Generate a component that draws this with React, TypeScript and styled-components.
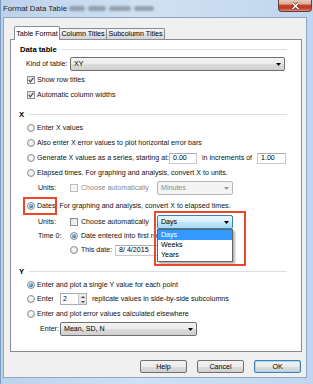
import React from 'react'
import styled, { createGlobalStyle } from 'styled-components'

const GlobalStyle = createGlobalStyle`
  html, body {
    margin: 0;
    padding: 0;
  }
  body {
    width: 313px;
    height: 384px;
    overflow: hidden;
    font-family: 'Liberation Sans', Arial, sans-serif;
    font-size: 7.1px;
    color: #000;
  }
  * {
    box-sizing: border-box;
  }
`

const Window = styled.div`
  width: 313px;
  height: 384px;
  display: flex;
  flex-direction: column;
  padding: 0 6px 6px 2px;
  border-left: 1px solid #7e9cc0;
  background: linear-gradient(90deg, #bcd2eb 0%, #d0e1f3 45%, #c0d6ee 100%);
`

const TitleBar = styled.div`
  height: 17px;
  display: flex;
  align-items: flex-start;
  margin-right: -6px;
  flex-shrink: 0;
`

const Title = styled.span`
  font-size: 7.8px;
  color: #1b1b1b;
  margin-top: 4px;
  white-space: nowrap;
`

const Smudges = styled.div`
  display: flex;
  margin-top: 6px;
  margin-left: 2px;
`

const Smudge = styled.span<{ $w: number }>`
  width: ${({ $w }) => $w}px;
  height: 5px;
  margin-right: 3px;
  border-radius: 3px;
  background: #6f7882;
  opacity: 0.6;
  filter: blur(1.2px);
`

const CloseButton = styled.div`
  margin-left: auto;
  margin-right: 1px;
  width: 34px;
  height: 12px;
  border: 1px solid #6a3b31;
  border-top: none;
  border-radius: 0 0 4px 4px;
  background: linear-gradient(180deg, #e6c9bb 0%, #d8aa98 38%, #c8452f 45%, #bd3722 72%, #d48c7b 100%);
  display: flex;
  align-items: center;
  justify-content: center;
`

const Client = styled.div`
  flex: 1;
  display: flex;
  flex-direction: column;
  background: #f0f0f0;
  border: 1px solid #8ea7c4;
`

const TabStrip = styled.div`
  height: 13px;
  margin-top: 8px;
  margin-left: 11px;
  display: flex;
  align-items: flex-start;
  flex-shrink: 0;
`

const Tab = styled.div<{ $active?: boolean; $w: number }>`
  position: relative;
  width: ${({ $w }) => $w}px;
  height: ${({ $active }) => ($active ? 14 : 11)}px;
  margin-top: ${({ $active }) => ($active ? 0 : 2)}px;
  margin-left: -1px;
  z-index: ${({ $active }) => ($active ? 2 : 0)};
  border: 1px solid #898c95;
  border-bottom: none;
  border-radius: 2px 2px 0 0;
  background: ${({ $active }) => ($active ? '#fff' : 'linear-gradient(180deg, #f3f3f3 0%, #ebebeb 50%, #dedede 51%, #d7d7d7 100%)')};
  display: flex;
  align-items: center;
  justify-content: center;
  white-space: nowrap;
`

const Panel = styled.div`
  position: relative;
  z-index: 1;
  margin-left: 6px;
  width: 292px;
  height: 313px;
  background: #fff;
  border: 1px solid #898c95;
  display: flex;
  flex-direction: column;
  flex-shrink: 0;
`

const Row = styled.div<{ $mt?: number; $pl?: number }>`
  position: relative;
  height: 14px;
  flex-shrink: 0;
  display: flex;
  align-items: center;
  margin-top: ${({ $mt }) => $mt ?? 0}px;
  padding-left: ${({ $pl }) => $pl ?? 16}px;
  white-space: nowrap;
`

const SectionRow = styled(Row)`
  padding-right: 14px;
`

const SectionTitle = styled.span`
  font-weight: bold;
  font-size: 7.7px;
`

const Rule = styled.span`
  flex: 1;
  height: 1px;
  margin-left: 5px;
  background: #d5dfe5;
`

const Text = styled.span<{ $disabled?: boolean; $w?: number; $ml?: number }>`
  color: ${({ $disabled }) => ($disabled ? '#8a8a8a' : '#111')};
  margin-left: ${({ $ml }) => $ml ?? 0}px;
  ${({ $w }) => ($w ? `width: ${$w}px; flex-shrink: 0; overflow: hidden;` : '')}
`

const RadioDot = styled.span<{ $on?: boolean }>`
  width: 8px;
  height: 8px;
  flex-shrink: 0;
  border-radius: 50%;
  border: 1px solid #8e8f8f;
  background: radial-gradient(circle at 50% 40%, #ffffff 0%, #e8e8e8 60%, #cfcfcf 100%);
  display: flex;
  align-items: center;
  justify-content: center;

  &::after {
    content: '';
    width: 4px;
    height: 4px;
    border-radius: 50%;
    background: ${({ $on }) => ($on ? 'radial-gradient(circle at 40% 35%, #9bd8ff 0%, #2a7fc6 55%, #0c3f78 100%)' : 'transparent')};
  }
`

const CheckBox = styled.span<{ $disabled?: boolean }>`
  width: 8px;
  height: 8px;
  flex-shrink: 0;
  border: 1px solid ${({ $disabled }) => ($disabled ? '#bdbdbd' : '#8e8f8f')};
  background: ${({ $disabled }) => ($disabled ? '#f4f4f4' : 'linear-gradient(135deg, #dedede 0%, #fbfbfb 100%)')};
  display: flex;
  align-items: center;
  justify-content: center;
`

const TextBox = styled.div<{ $w: number; $ml?: number }>`
  width: ${({ $w }) => $w}px;
  height: 11px;
  margin-left: ${({ $ml }) => $ml ?? 0}px;
  flex-shrink: 0;
  border: 1px solid #c5cad2;
  border-top-color: #abadb3;
  background: #fff;
  padding-left: 3px;
  display: flex;
  align-items: center;
`

const Combo = styled.div<{ $w: number; $variant?: 'normal' | 'hot' | 'disabled' }>`
  width: ${({ $w }) => $w}px;
  height: 14px;
  flex-shrink: 0;
  display: flex;
  align-items: center;
  justify-content: space-between;
  padding: 0 3px 0 3px;
  border-radius: 2px;
  border: 1px solid
    ${({ $variant }) => ($variant === 'hot' ? '#3c7fb1' : $variant === 'disabled' ? '#b4b8bc' : '#707070')};
  background: ${({ $variant }) =>
    $variant === 'hot'
      ? 'linear-gradient(180deg, #eaf6fd 0%, #d9f0fc 50%, #bee6fd 51%, #a7d9f5 100%)'
      : $variant === 'disabled'
      ? '#f4f4f4'
      : 'linear-gradient(180deg, #f2f2f2 0%, #ebebeb 50%, #dddddd 51%, #cfcfcf 100%)'};
  color: ${({ $variant }) => ($variant === 'disabled' ? '#8a8a8a' : '#000')};
`

const ComboAnchor = styled.div`
  position: relative;
  z-index: 5;
  flex-shrink: 0;
`

const DropList = styled.div`
  position: absolute;
  top: 14px;
  left: 0;
  width: 76px;
  height: 33px;
  background: #fff;
  border: 1px solid #646464;
  box-shadow: 2px 2px 2px rgba(0, 0, 0, 0.3);
`

const DropItem = styled.div<{ $selected?: boolean }>`
  height: 10px;
  padding-left: 3px;
  display: flex;
  align-items: center;
  background: ${({ $selected }) => ($selected ? '#3399ff' : 'transparent')};
  color: ${({ $selected }) => ($selected ? '#fff' : '#000')};
`

const DatesHighlight = styled.div`
  position: absolute;
  left: 12px;
  top: -2px;
  width: 34px;
  height: 18px;
  border: 2px solid #e9482a;
  pointer-events: none;
`

const ListHighlight = styled.div`
  position: absolute;
  left: -3px;
  top: -4px;
  width: 92px;
  height: 55px;
  border: 2px solid #e9482a;
  pointer-events: none;
`

const Spin = styled.div`
  width: 27px;
  height: 12px;
  margin-left: 7px;
  flex-shrink: 0;
  display: flex;
  border: 1px solid #abadb3;
  background: #fff;
`

const SpinValue = styled.span`
  flex: 1;
  padding-left: 2px;
  display: flex;
  align-items: center;
`

const SpinButtons = styled.div`
  width: 8px;
  display: flex;
  flex-direction: column;
  border-left: 1px solid #c4c9d0;
`

const SpinButton = styled.div`
  flex: 1;
  display: flex;
  align-items: center;
  justify-content: center;
  background: linear-gradient(180deg, #f3f3f3, #dcdcdc);
`

const ButtonBar = styled.div`
  display: flex;
  justify-content: flex-end;
  gap: 10px;
  margin-top: 8px;
  padding-right: 5px;
`

const Button = styled.div<{ $default?: boolean }>`
  width: 47px;
  height: 13px;
  border-radius: 2px;
  border: 1px solid ${({ $default }) => ($default ? '#3c7fb1' : '#707070')};
  box-shadow: ${({ $default }) => ($default ? 'inset 0 0 0 1px #a6d6f5' : 'none')};
  background: linear-gradient(180deg, #f2f2f2 0%, #ebebeb 50%, #dddddd 51%, #cfcfcf 100%);
  display: flex;
  align-items: center;
  justify-content: center;
`

const Arrow: React.FC<{ color?: string }> = ({ color = '#000' }) => (
  <svg width="5" height="3" viewBox="0 0 5 3">
    <polygon points="0,0 5,0 2.5,3" fill={color} />
  </svg>
)

const SmallArrow: React.FC<{ up?: boolean }> = ({ up }) => (
  <svg width="4" height="2" viewBox="0 0 4 2">
    <polygon points={up ? '0,2 4,2 2,0' : '0,0 4,0 2,2'} fill="#4a4a4a" />
  </svg>
)

const Check: React.FC<{ checked?: boolean; disabled?: boolean }> = ({ checked, disabled }) => (
  <CheckBox $disabled={disabled}>
    {checked && (
      <svg width="6" height="6" viewBox="0 0 6 6">
        <polyline points="0.8,3 2.4,4.8 5.3,0.9" fill="none" stroke="#3e4c66" strokeWidth="1.2" />
      </svg>
    )}
  </CheckBox>
)

const Section: React.FC<{ title: string; mt: number; pl: number }> = ({ title, mt, pl }) => (
  <SectionRow $mt={mt} $pl={pl}>
    <SectionTitle>{title}</SectionTitle>
    <Rule />
  </SectionRow>
)

export default function App() {
  return (
    <>
      <GlobalStyle />
      <Window>
        <TitleBar>
          <Title>Format Data Table</Title>
          <Smudges>
            <Smudge $w={16} />
            <Smudge $w={18} />
            <Smudge $w={22} />
            <Smudge $w={20} />
          </Smudges>
          <CloseButton>
            <svg width="9" height="8" viewBox="0 0 9 8">
              <path d="M1.5 1 L7.5 7 M7.5 1 L1.5 7" stroke="#5a2218" strokeWidth="2.6" />
              <path d="M1.5 1 L7.5 7 M7.5 1 L1.5 7" stroke="#fff" strokeWidth="1.5" />
            </svg>
          </CloseButton>
        </TitleBar>
        <Client>
          <TabStrip>
            <Tab $active $w={46}>Table Format</Tab>
            <Tab $w={48}>Column Titles</Tab>
            <Tab $w={59}>Subcolumn Titles</Tab>
          </TabStrip>
          <Panel>
            <Section title="Data table" mt={2} pl={9} />
            <Row $mt={1} $pl={15}>
              <Text $w={44}>Kind of table:</Text>
              <Combo $w={215}>
                <span>XY</span>
                <Arrow />
              </Combo>
            </Row>
            <Row $mt={2}>
              <Check checked />
              <Text $ml={2}>Show row titles</Text>
            </Row>
            <Row $mt={1}>
              <Check checked />
              <Text $ml={2}>Automatic column widths</Text>
            </Row>

            <Section title="X" mt={5} pl={8} />
            <Row>
              <RadioDot />
              <Text $ml={2}>Enter X values</Text>
            </Row>
            <Row $mt={1}>
              <RadioDot />
              <Text $ml={2}>Also enter X error values to plot horizontal error bars</Text>
            </Row>
            <Row $mt={1}>
              <RadioDot />
              <Text $ml={2} $w={132}>Generate X values as a series, starting at:</Text>
              <TextBox $w={28}>0.00</TextBox>
              <Text $ml={5} $w={55}>in increments of</Text>
              <TextBox $w={29}>1.00</TextBox>
            </Row>
            <Row $mt={1}>
              <RadioDot />
              <Text $ml={2}>Elapsed times. For graphing and analysis, convert X to units.</Text>
            </Row>
            <Row $mt={1} $pl={27}>
              <Text $w={32}>Units:</Text>
              <Check disabled />
              <Text $ml={3} $w={76} $disabled>Choose automatically</Text>
              <Combo $w={76} $variant="disabled">
                <span>Minutes</span>
                <Arrow color="#9a9a9a" />
              </Combo>
            </Row>
            <Row $mt={4}>
              <DatesHighlight />
              <RadioDot $on />
              <Text $ml={2}>Dates. For graphing and analysis, convert X to elapsed times.</Text>
            </Row>
            <Row $mt={2} $pl={27}>
              <Text $w={32}>Units:</Text>
              <Check />
              <Text $ml={3} $w={76}>Choose automatically</Text>
              <ComboAnchor>
                <Combo $w={76} $variant="hot">
                  <span>Days</span>
                  <Arrow />
                </Combo>
                <DropList>
                  <DropItem $selected>Days</DropItem>
                  <DropItem>Weeks</DropItem>
                  <DropItem>Years</DropItem>
                </DropList>
                <ListHighlight />
              </ComboAnchor>
            </Row>
            <Row $pl={27}>
              <Text $w={32}>Time 0:</Text>
              <RadioDot $on />
              <Text $ml={3}>Date entered into first row</Text>
            </Row>
            <Row $pl={59}>
              <RadioDot />
              <Text $ml={3} $w={34}>This date:</Text>
              <TextBox $w={70}>8/ 4/2015</TextBox>
            </Row>

            <Section title="Y" mt={7} pl={8} />
            <Row>
              <RadioDot $on />
              <Text $ml={2}>Enter and plot a single Y value for each point</Text>
            </Row>
            <Row>
              <RadioDot />
              <Text $ml={2} $w={16}>Enter</Text>
              <Spin>
                <SpinValue>2</SpinValue>
                <SpinButtons>
                  <SpinButton>
                    <SmallArrow up />
                  </SpinButton>
                  <SpinButton>
                    <SmallArrow />
                  </SpinButton>
                </SpinButtons>
              </Spin>
              <Text $ml={5}>replicate values in side-by-side subcolumns</Text>
            </Row>
            <Row $mt={1}>
              <RadioDot />
              <Text $ml={2}>Enter and plot error values calculated elsewhere</Text>
            </Row>
            <Row $mt={1} $pl={29}>
              <Text $w={20}>Enter:</Text>
              <Combo $w={137}>
                <span>Mean, SD, N</span>
                <Arrow />
              </Combo>
            </Row>
          </Panel>
          <ButtonBar>
            <Button>Help</Button>
            <Button>Cancel</Button>
            <Button $default>OK</Button>
          </ButtonBar>
        </Client>
      </Window>
    </>
  )
}
